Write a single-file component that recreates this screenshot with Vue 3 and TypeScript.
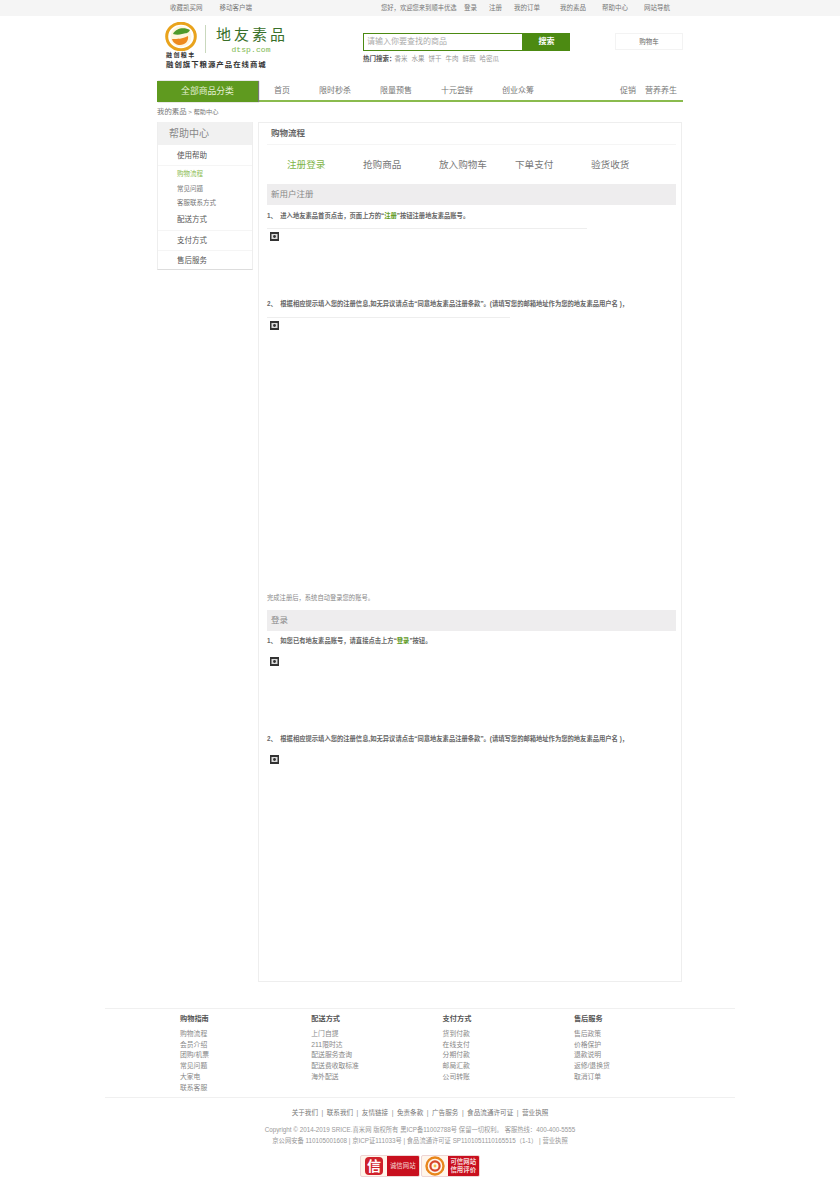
<script setup lang="ts">
const topRight = ['登录', '注册', '我的订单']
const topRight2 = ['我的素品', '帮助中心', '网站导航']
const hot = ['香米', '水果', '饼干', '牛肉', '鲜蔬', '哈密瓜']
const navItems = ['首页', '限时秒杀', '限量预售', '十元尝鲜', '创业众筹']
const steps = ['注册登录', '抢购商品', '放入购物车', '下单支付', '验货收货']
const footerCols = [
  { title: '购物指南', items: ['购物流程', '会员介绍', '团购/机票', '常见问题', '大家电', '联系客服'] },
  { title: '配送方式', items: ['上门自提', '211限时达', '配送服务查询', '配送费收取标准', '海外配送'] },
  { title: '支付方式', items: ['货到付款', '在线支付', '分期付款', '邮局汇款', '公司转账'] },
  { title: '售后服务', items: ['售后政策', '价格保护', '退款说明', '返修/退换货', '取消订单'] },
]
const footerLinks = ['关于我们', '联系我们', '友情链接', '免责条款', '广告服务', '食品流通许可证', '营业执照']
</script>

<template>
  <div class="page">
    <div class="topbar">
      <div class="topInner">
        <div class="topLeft">
          <a>收藏凯买网</a>
          <a>移动客户端</a>
        </div>
        <div class="topRight">
          <span class="welcome">您好，欢迎您来到顺丰优选</span>
          <a v-for="t in topRight" :key="t">{{ t }}</a>
          <span class="topGroup">
            <a v-for="t in topRight2" :key="t">{{ t }}</a>
          </span>
        </div>
      </div>
    </div>

    <div class="header">
      <div class="logo">
        <div class="logoTop">
          <div class="logoMark">
            <svg width="32" height="29" viewBox="0 0 32 29">
              <ellipse cx="16" cy="14.5" rx="14.3" ry="13.3" fill="none" stroke="#e9a31c" stroke-width="3" />
              <circle cx="16" cy="14.5" r="10.5" fill="#fff6dc" />
              <path d="M8 12c3-6 11-7 17-4-2 4-5 3-8 4-3 1-6 1-9 0z" fill="#4f9a2a" />
              <path d="M7 17c6 0 10 0 16-3 1 5-3 9-8 9-3 0-7-2-8-6z" fill="#ee8a1e" />
            </svg>
            <span class="logoBrand">融创粮丰</span>
          </div>
          <div class="logoDivider"></div>
          <div class="logoName">
            <span class="logoCn">地友素品</span>
            <span class="logoEn">dtsp.com</span>
          </div>
        </div>
        <div class="logoSlogan">融创旗下粮源产品在线商城</div>
      </div>

      <div class="searchWrap">
        <div class="search">
          <div class="searchInput">请输入你要查找的商品</div>
          <div class="searchBtn">搜索</div>
        </div>
        <div class="hot">
          <b>热门搜索：</b>
          <a v-for="h in hot" :key="h">{{ h }}</a>
        </div>
      </div>

      <div class="cart">购物车</div>
    </div>

    <div class="nav">
      <div class="allCats">全部商品分类</div>
      <div class="navItems">
        <a v-for="n in navItems" :key="n">{{ n }}</a>
      </div>
      <div class="navRight">
        <a>促销</a>
        <a>营养养生</a>
      </div>
    </div>

    <div class="crumbs"><span>我的素品</span> &gt; 帮助中心</div>

    <div class="content">
      <aside class="sidebar">
        <div class="sideTitle">帮助中心</div>
        <div class="sideGroup first">使用帮助</div>
        <div class="sideSub">
          <a class="active">购物流程</a>
          <a>常见问题</a>
          <a>客服联系方式</a>
        </div>
        <div class="sideGroup tight">配送方式</div>
        <div class="sideGroup">支付方式</div>
        <div class="sideGroup">售后服务</div>
      </aside>

      <main class="main">
        <div class="mainTitle">购物流程</div>
        <div class="steps">
          <span v-for="(s, i) in steps" :key="s" :class="{ step: true, current: i === 0 }">{{ s }}</span>
        </div>

        <div class="bar">新用户注册</div>
        <p class="line">1、&nbsp;&nbsp;进入地友素品首页点击，页面上方的“<em>注册</em>”按钮注册地友素品账号。</p>
        <div class="rule w320"></div>
        <div class="shot h1">
          <svg class="broken" width="9" height="9" viewBox="0 0 9 9">
            <rect width="9" height="9" fill="#333" />
            <rect x="1.5" y="2" width="6" height="5" fill="#ddd" />
            <circle cx="4.5" cy="4.5" r="1.4" fill="#333" />
          </svg>
        </div>
        <p class="line">2、&nbsp;&nbsp;根据相应提示填入您的注册信息,如无异议请点击“同意地友素品注册条款”。(请填写您的邮箱地址作为您的地友素品用户名 )，</p>
        <div class="rule w243"></div>
        <div class="shot h2">
          <svg class="broken" width="9" height="9" viewBox="0 0 9 9">
            <rect width="9" height="9" fill="#333" />
            <rect x="1.5" y="2" width="6" height="5" fill="#ddd" />
            <circle cx="4.5" cy="4.5" r="1.4" fill="#333" />
          </svg>
        </div>
        <p class="note">完成注册后，系统自动登录您的账号。</p>

        <div class="bar">登录</div>
        <p class="line compact">1、&nbsp;&nbsp;如您已有地友素品账号，请直接点击上方“<em>登录</em>”按钮。</p>
        <div class="shot h3">
          <svg class="broken" width="9" height="9" viewBox="0 0 9 9">
            <rect width="9" height="9" fill="#333" />
            <rect x="1.5" y="2" width="6" height="5" fill="#ddd" />
            <circle cx="4.5" cy="4.5" r="1.4" fill="#333" />
          </svg>
        </div>
        <p class="line">2、&nbsp;&nbsp;根据相应提示填入您的注册信息,如无异议请点击“同意地友素品注册条款”。(请填写您的邮箱地址作为您的地友素品用户名 )，</p>
        <div class="shot h4">
          <svg class="broken" width="9" height="9" viewBox="0 0 9 9">
            <rect width="9" height="9" fill="#333" />
            <rect x="1.5" y="2" width="6" height="5" fill="#ddd" />
            <circle cx="4.5" cy="4.5" r="1.4" fill="#333" />
          </svg>
        </div>
      </main>
    </div>

    <div class="footerCols">
      <div v-for="col in footerCols" :key="col.title" class="footerCol">
        <h4>{{ col.title }}</h4>
        <a v-for="item in col.items" :key="item">{{ item }}</a>
      </div>
    </div>

    <div class="footerLinks">
      <template v-for="(l, i) in footerLinks" :key="l">
        <a>{{ l }}</a><span v-if="i < footerLinks.length - 1" class="sep">|</span>
      </template>
    </div>
    <div class="copy">
      <div>Copyright © 2014-2019 SRICE.喜米网 版权所有 黑ICP备11002788号 保留一切权利。 客服热线：400-400-5555</div>
      <div>京公网安备 110105001608 | 京ICP证111033号 | 食品流通许可证 SP1101051110165515（1-1） | 营业执照</div>
    </div>

    <div class="badges">
      <div class="badge">
        <div class="badgeIcon">
          <span class="xin">信</span>
        </div>
        <div class="badgeText">诚信网站</div>
      </div>
      <div class="badge">
        <div class="badgeIcon">
          <svg width="20" height="20" viewBox="0 0 20 20">
            <circle cx="10" cy="10" r="8.5" fill="none" stroke="#e8861c" stroke-width="2.4" />
            <circle cx="10" cy="10" r="4.6" fill="none" stroke="#d6452a" stroke-width="2.2" />
            <circle cx="10" cy="10" r="1.4" fill="#f0c040" />
          </svg>
        </div>
        <div class="badgeText two"><span>可信网站</span><span>信用评价</span></div>
      </div>
    </div>
  </div>
</template>

<style>
body {
  background: #fff;
}
</style>

<style scoped>
.page {
  width: 840px;
  height: 1179px;
  overflow: hidden;
  font-family: "Liberation Sans", "Noto Sans CJK SC", sans-serif;
  color: #666;
  font-size: 7px;
}

.topbar {
  height: 16px;
  background: #f5f5f5;
}
.topInner {
  display: flex;
  height: 16px;
  line-height: 16px;
  padding: 0 0 0 170px;
  color: #777;
  font-size: 6.5px;
  white-space: nowrap;
}
.topLeft {
  display: flex;
  gap: 17px;
  width: 211px;
}
.topRight {
  display: flex;
}
.welcome {
  width: 83px;
  font-size: 6.3px;
}
.topRight > a {
  width: 25px;
}
.topRight > a:nth-of-type(3) {
  width: 46px;
}
.topGroup {
  display: flex;
  gap: 16px;
}

.header {
  display: flex;
  height: 65px;
  margin-left: 165px;
  width: 518px;
}
.logo {
  width: 198px;
  padding-top: 6px;
}
.logoTop {
  display: flex;
  height: 37px;
}
.logoMark {
  display: flex;
  flex-direction: column;
  width: 37px;
}
.logoBrand {
  font-size: 6px;
  line-height: 8px;
  letter-spacing: 1.4px;
  font-weight: 700;
  color: #333;
  margin-left: 1px;
  white-space: nowrap;
}
.logoDivider {
  width: 1px;
  height: 28px;
  background: #c9d8bd;
  margin: 3px 10px 0 3px;
}
.logoName {
  display: flex;
  flex-direction: column;
  align-items: center;
  width: 72px;
  padding-top: 4px;
}
.logoCn {
  font-size: 15px;
  line-height: 17px;
  letter-spacing: 3px;
  color: #39702a;
  white-space: nowrap;
}
.logoEn {
  font-family: "Liberation Mono", monospace;
  font-size: 8px;
  line-height: 11px;
  margin-top: 1px;
  margin-right: 2px;
  letter-spacing: 0.1px;
  color: #7db84e;
}
.logoSlogan {
  font-size: 7.4px;
  line-height: 10px;
  letter-spacing: 1px;
  font-weight: 700;
  color: #333;
  margin: 1px 0 0 1px;
  white-space: nowrap;
}

.searchWrap {
  width: 252px;
  padding-top: 17px;
}
.search {
  display: flex;
  width: 207px;
  height: 18px;
}
.searchInput {
  width: 160px;
  box-sizing: border-box;
  border: 1px solid #4c8a12;
  padding-left: 3px;
  line-height: 16px;
  font-size: 8px;
  color: #aaa;
}
.searchBtn {
  width: 47px;
  background: #4c8a12;
  color: #fff;
  font-size: 8px;
  font-weight: 700;
  line-height: 18px;
  text-align: center;
}
.hot {
  display: flex;
  gap: 4px;
  margin-top: 2px;
  font-size: 6.5px;
  line-height: 11px;
  color: #999;
}
.hot b {
  color: #555;
  margin-right: -5px;
}

.cart {
  width: 68px;
  height: 17px;
  margin-top: 17px;
  box-sizing: border-box;
  border: 1px solid #f3f3f3;
  line-height: 15px;
  font-size: 6.5px;
  text-align: center;
}

.nav {
  display: flex;
  height: 21px;
  width: 526px;
  margin-left: 157px;
  box-sizing: border-box;
  border-bottom: 2px solid #8abb4e;
  line-height: 19px;
  font-size: 8px;
  color: #777;
}
.allCats {
  width: 101px;
  height: 21px;
  background: #5f9a1f;
  color: #e4f0d4;
  text-align: center;
  font-size: 8.8px;
  line-height: 21px;
  box-shadow: 1px 0 1px #777;
}
.navItems {
  display: flex;
  gap: 29px;
  margin-left: 16px;
  flex: 1;
}
.navRight {
  display: flex;
  gap: 9px;
  margin-right: 6px;
}

.crumbs {
  margin: 5px 0 0 157px;
  line-height: 10px;
  height: 15px;
  font-size: 6.2px;
  color: #777;
}
.crumbs span {
  font-size: 7.4px;
}

.content {
  display: flex;
  gap: 5px;
  margin-left: 157px;
}
.sidebar {
  width: 96px;
  height: 148px;
  box-sizing: border-box;
  border: 1px solid #eee;
  border-top: 0;
  border-bottom: 1px solid #ddd;
}
.sideTitle {
  height: 23px;
  line-height: 24px;
  background: #f1f1f1;
  padding-left: 11px;
  font-size: 10px;
  color: #888;
}
.sideGroup {
  height: 19px;
  line-height: 19px;
  padding-left: 19px;
  font-size: 7.5px;
  color: #555;
  border-top: 1px solid #f5f5f5;
}
.sideGroup.first {
  border-top: 0;
  height: 20px;
  line-height: 21px;
}
.sideGroup.tight {
  border-top: 0;
  height: 19px;
  line-height: 17px;
}
.sideSub {
  display: flex;
  flex-direction: column;
  padding: 1px 0 0 19px;
  border-top: 1px solid #f5f5f5;
  font-size: 6.5px;
  line-height: 14.5px;
  color: #777;
}
.sideSub .active {
  color: #8abb4e;
}

.main {
  width: 424px;
  height: 860px;
  box-sizing: border-box;
  border: 1px solid #eee;
  padding: 0 5px 0 8px;
}
.mainTitle {
  height: 21px;
  line-height: 21px;
  padding-left: 4px;
  border-bottom: 1px solid #f5f5f5;
  font-size: 8.5px;
  font-weight: 700;
  color: #666;
}
.steps {
  display: flex;
  height: 39px;
  padding-left: 20px;
  line-height: 40px;
  font-size: 9.6px;
  color: #777;
}
.step {
  width: 76px;
}
.step.current {
  color: #7fb547;
}
.bar {
  height: 21px;
  line-height: 21px;
  padding-left: 4px;
  background: #eeedee;
  font-size: 8.5px;
  color: #888;
}
.line {
  margin: 0;
  height: 23px;
  line-height: 22px;
  font-size: 6.3px;
  font-weight: 700;
  color: #666;
  white-space: nowrap;
}
.line.compact {
  height: 21px;
  line-height: 20px;
}
.line em {
  font-style: normal;
  color: #5f9a1f;
}
.rule {
  height: 1px;
  background: #eee;
}
.w320 {
  width: 320px;
}
.w243 {
  width: 243px;
  margin-top: 1px;
}
.shot {
  padding: 3px 0 0 3px;
  box-sizing: border-box;
}
.broken {
  display: block;
}
.h1 {
  height: 64px;
}
.h2 {
  height: 272.5px;
}
.h3 {
  height: 76px;
  padding-top: 5px;
}
.h4 {
  height: 30px;
  padding-top: 4px;
}
.note {
  margin: 0 0 6.5px;
  height: 13px;
  line-height: 13px;
  font-size: 6.3px;
  color: #888;
}

.footerCols {
  display: grid;
  grid-template-columns: repeat(4, 131.3px);
  width: 630px;
  height: 90px;
  margin: 26px 0 0 105px;
  box-sizing: border-box;
  padding: 4px 0 0 75px;
  border-top: 1px solid #f0f0f0;
  border-bottom: 1px solid #f0f0f0;
}
.footerCol h4 {
  margin: 0 0 4px;
  font-size: 7.2px;
  line-height: 12px;
  color: #555;
}
.footerCol a {
  display: block;
  font-size: 6.8px;
  line-height: 10.7px;
  color: #888;
}

.footerLinks {
  display: flex;
  justify-content: center;
  gap: 3px;
  margin-top: 10px;
  font-size: 6.6px;
  line-height: 10px;
  color: #777;
}
.sep {
  color: #888;
  margin: 0 0.5px;
}
.copy {
  margin-top: 7px;
  text-align: center;
  font-size: 6.3px;
  line-height: 10.5px;
  color: #999;
}
.badges {
  display: flex;
  justify-content: center;
  gap: 1px;
  margin-top: 9px;
}
.badge {
  display: flex;
  width: 59.5px;
  height: 22px;
  box-sizing: border-box;
  border: 1px solid #eed5d5;
  border-radius: 2px;
  overflow: hidden;
  background: #fff5ea;
}
.badgeIcon {
  display: flex;
  align-items: center;
  justify-content: center;
  width: 26px;
  flex-shrink: 0;
}
.xin {
  display: block;
  width: 18px;
  height: 18px;
  background: #d0212a;
  border-radius: 4px;
  color: #fff;
  font-size: 14px;
  line-height: 18px;
  text-align: center;
  font-weight: 700;
}
.badgeText {
  flex: 1;
  background: #c80f1e;
  color: #f7dcdc;
  font-size: 6.4px;
  line-height: 20px;
  text-align: center;
  white-space: nowrap;
}
.badgeText.two {
  display: flex;
  flex-direction: column;
  justify-content: center;
  line-height: 8px;
  font-weight: 700;
}
</style>
